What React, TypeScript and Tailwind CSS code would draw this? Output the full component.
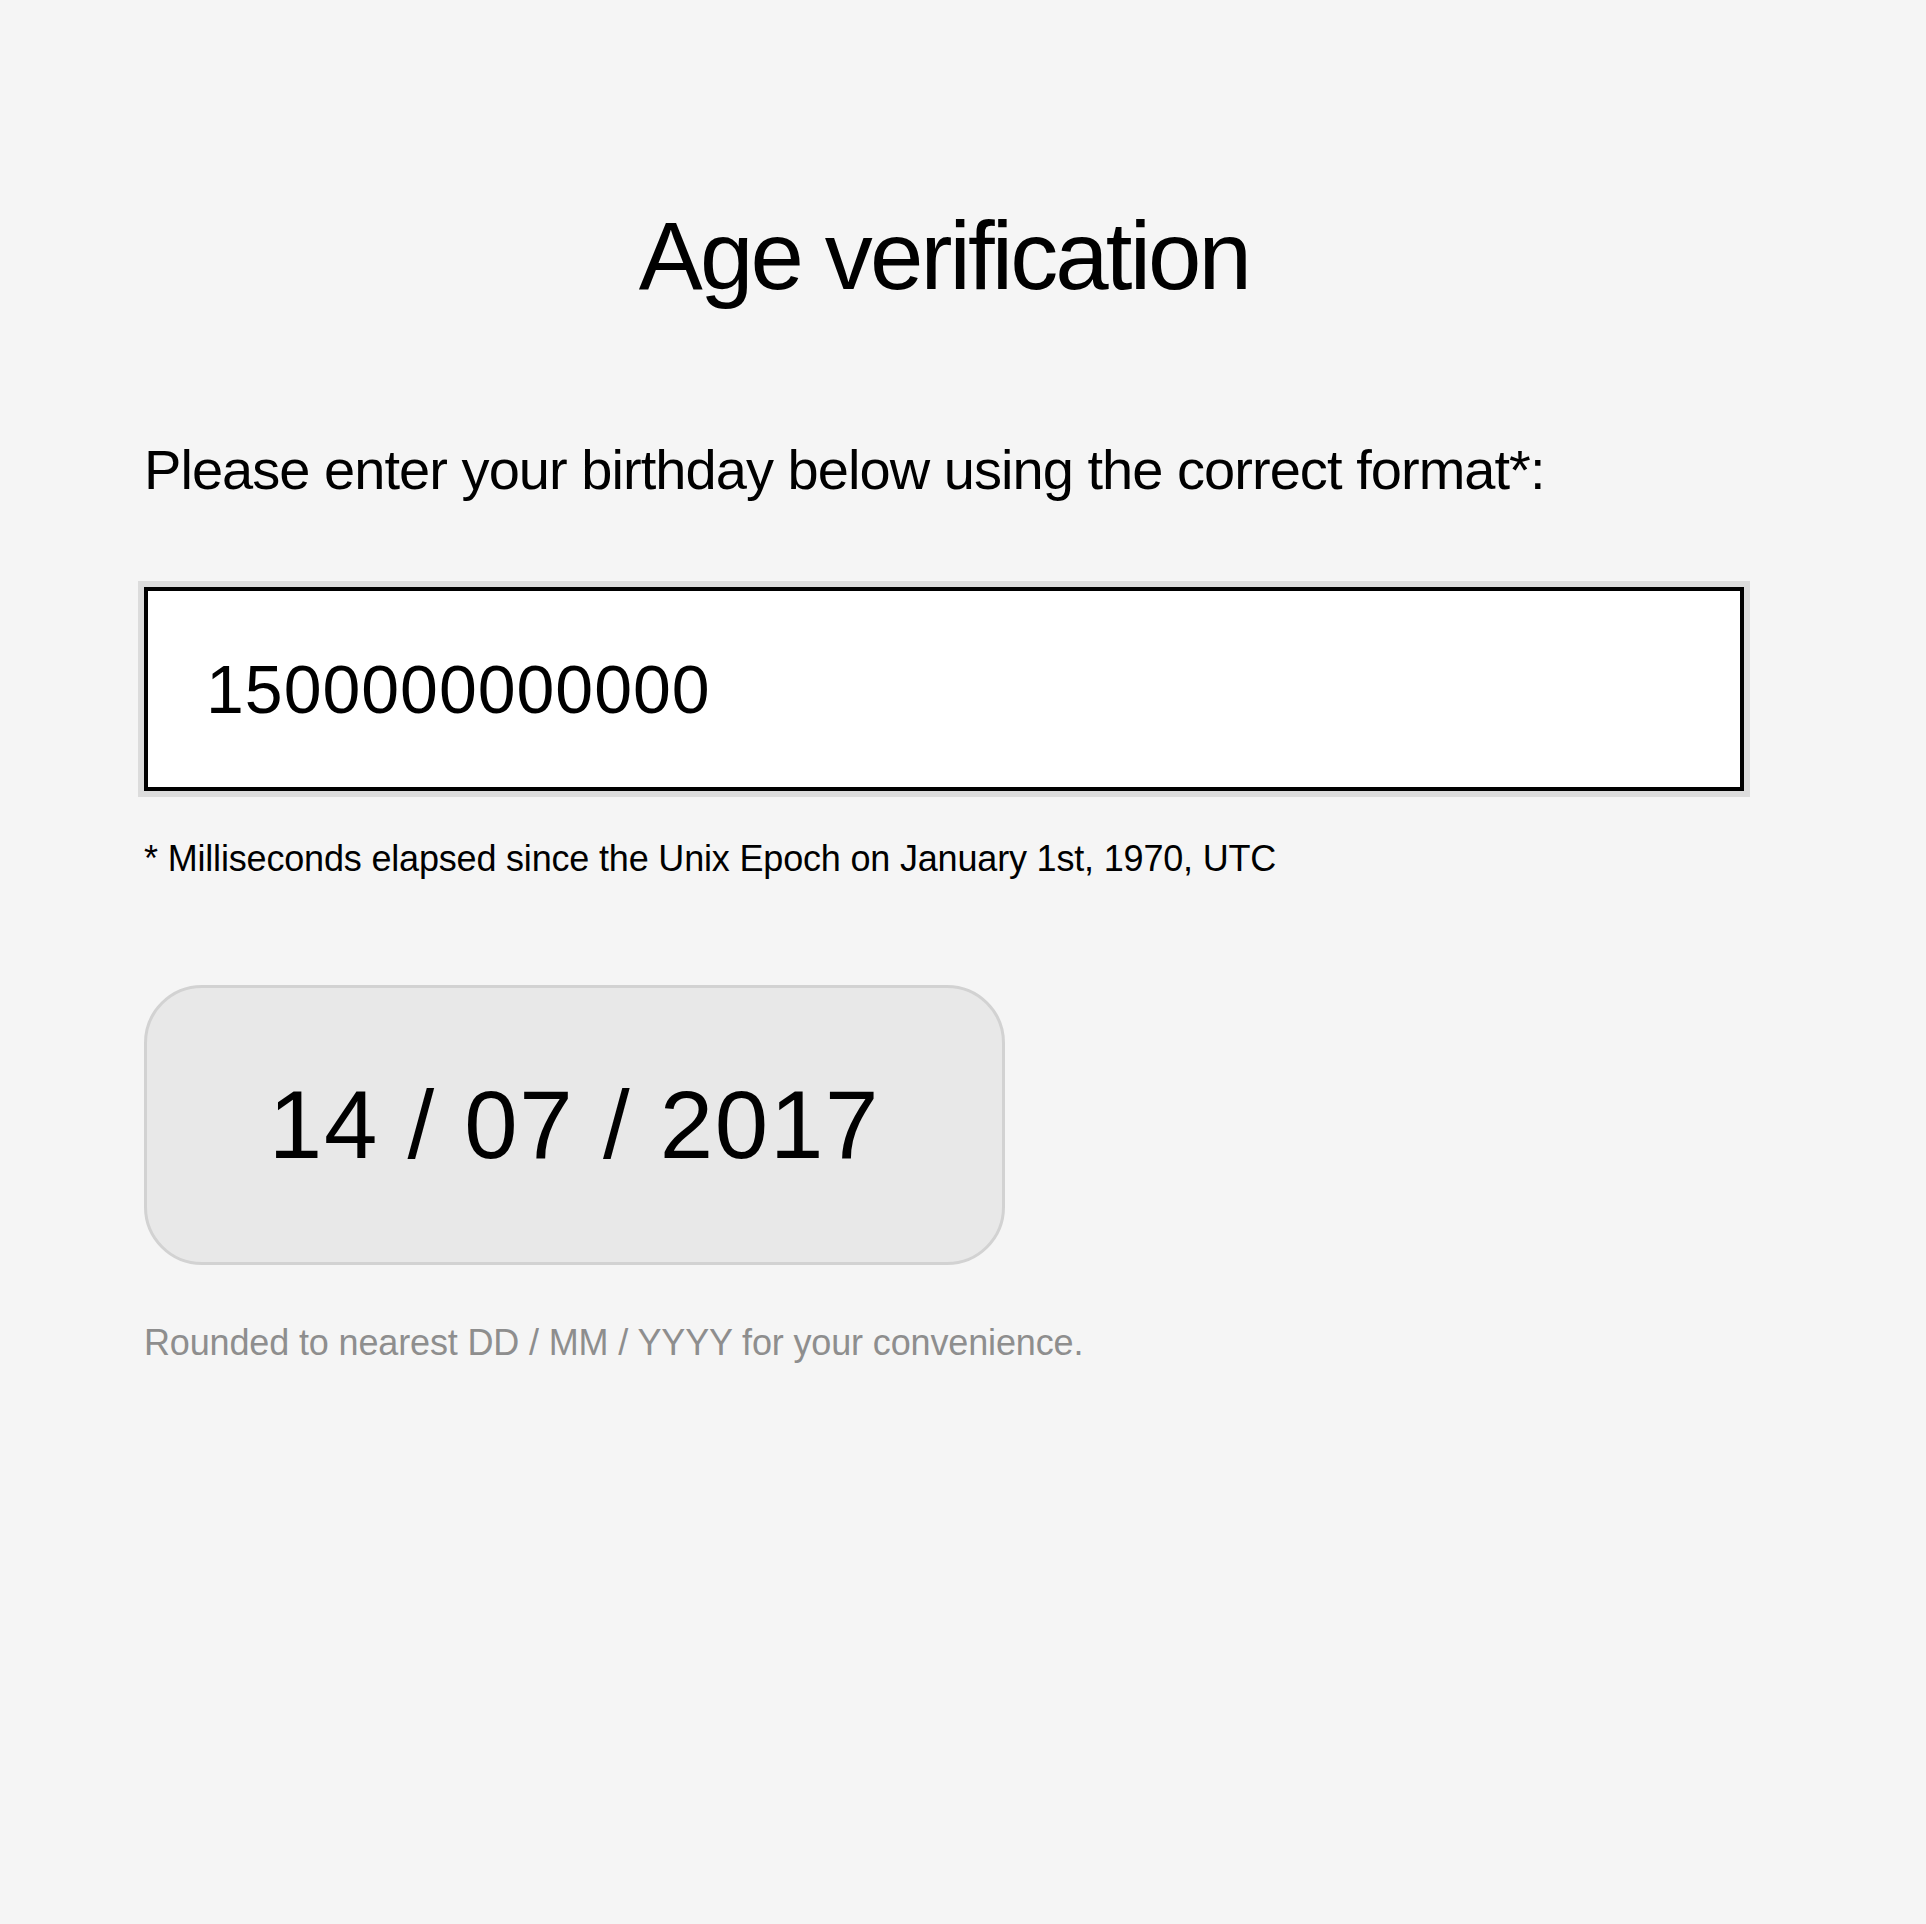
export default function App() {
  return (
    <div
      className="min-h-screen bg-[#f5f5f5] text-black"
      style={{ fontFamily: '"Liberation Sans", Arial, sans-serif' }}
    >
      <div className="ml-[144px] w-[1600px] pt-[208px] pb-[200px] flex flex-col">
        <h1 className="text-center text-[96px] leading-none tracking-[-0.03em] font-normal">
          Age verification
        </h1>

        <p className="mt-[138px] text-[56px] leading-none tracking-[-0.017em]">
          Please enter your birthday below using the correct format*:
        </p>

        <input
          type="text"
          defaultValue="1500000000000"
          className="mt-[89px] h-[204px] w-full bg-white border-4 border-black outline-6 outline-solid outline-[#dcdcdc] pl-[58px] text-[68px] leading-none tracking-[1px]"
        />

        <p className="mt-[50px] text-[36px] leading-none tracking-[-0.005em]">
          * Milliseconds elapsed since the Unix Epoch on January 1st, 1970, UTC
        </p>

        <div className="mt-[108px] h-[280px] w-[861px] rounded-[58px] border-[3px] border-[#d2d2d2] bg-[#e8e8e8] flex items-center justify-center">
          <span className="text-[96px] leading-none tracking-[0.018em]">14 / 07 / 2017</span>
        </div>

        <p className="mt-[60px] text-[36px] leading-none tracking-[-0.004em] text-[#8e8e8e]">
          Rounded to nearest DD / MM / YYYY for your convenience.
        </p>
      </div>
    </div>
  )
}
